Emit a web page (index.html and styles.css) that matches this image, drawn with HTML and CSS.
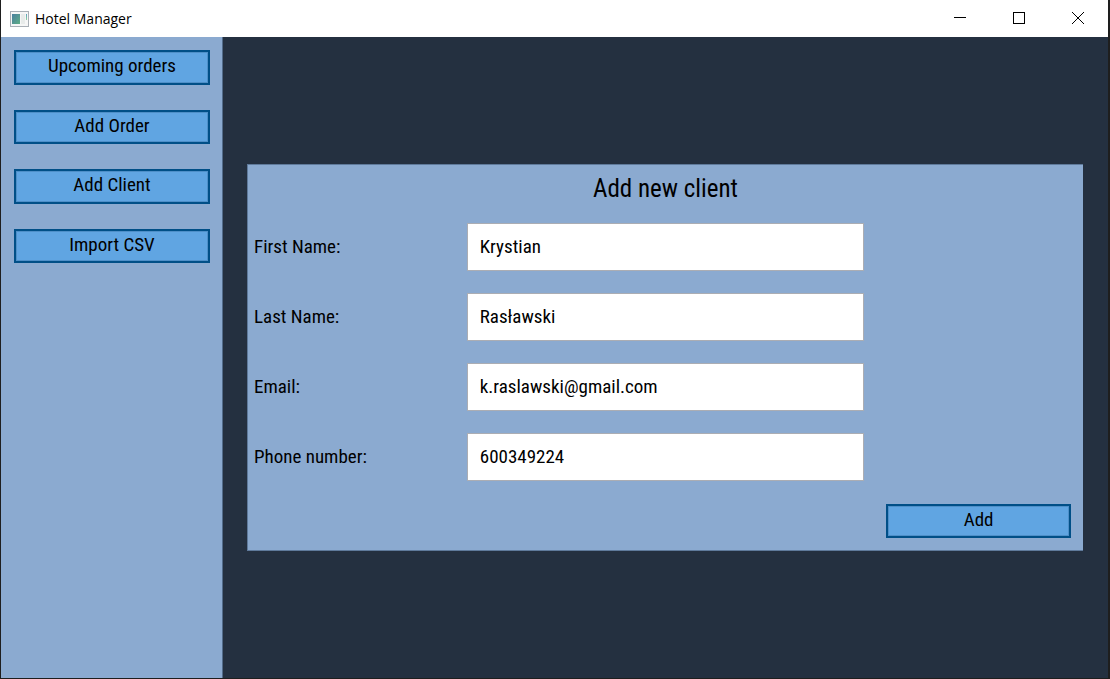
FILE: index.html
```html
<!DOCTYPE html>
<html lang="en">
<head>
<meta charset="utf-8">
<meta name="viewport" content="width=device-width, initial-scale=1">
<title>Hotel Manager</title>
<link rel="stylesheet" href="styles.css">
</head>
<body>
<div class="window">
  <header class="titlebar">
    <svg class="app-icon" width="20" height="16" viewBox="0 0 20 16" aria-hidden="true" shape-rendering="crispEdges">
      <defs>
        <linearGradient id="pane" x1="0" y1="0" x2="1" y2="1"><stop offset="0" stop-color="#4a7f9f"/><stop offset="1" stop-color="#5fae86"/></linearGradient>
        <linearGradient id="side" x1="0" y1="0" x2="0" y2="1"><stop offset="0" stop-color="#5c9fc0"/><stop offset="1" stop-color="#8fd39a"/></linearGradient>
      </defs>
      <rect x="0.5" y="0.5" width="18" height="15" fill="#f6f6f6" stroke="#a9afb6"/>
      <rect x="2" y="3" width="8" height="10" fill="url(#pane)"/>
      <rect x="11" y="3" width="4" height="10" fill="#e8ebea"/>
      <rect x="16" y="3" width="1" height="6" fill="url(#side)"/>
    </svg>
    <h1 class="app-name">Hotel Manager</h1>
    <div class="window-controls">
      <button class="window-button" type="button" aria-label="Minimize"><svg width="12" height="12" viewBox="0 0 12 12" shape-rendering="crispEdges"><path d="M0 5.5H12" stroke="#000"/></svg></button>
      <button class="window-button" type="button" aria-label="Maximize"><svg width="12" height="12" viewBox="0 0 12 12" shape-rendering="crispEdges"><rect x="0.5" y="0.5" width="11" height="11" fill="none" stroke="#000"/></svg></button>
      <button class="window-button" type="button" aria-label="Close"><svg width="12" height="12" viewBox="0 0 12 12"><path d="M0 0L12 12M12 0L0 12" stroke="#000"/></svg></button>
    </div>
  </header>
  <div class="content">
    <nav class="sidebar" aria-label="Main">
      <div class="menu">
        <button class="button" type="button">Upcoming orders</button>
        <button class="button" type="button">Add Order</button>
        <button class="button" type="button">Add Client</button>
        <button class="button" type="button">Import CSV</button>
      </div>
    </nav>
    <main class="workspace">
      <form class="panel">
        <h2 class="panel-title">Add new client</h2>
        <div class="field"><label for="first-name">First Name:</label><input id="first-name" type="text" value="Krystian"></div>
        <div class="field"><label for="last-name">Last Name:</label><input id="last-name" type="text" value="Rasławski"></div>
        <div class="field"><label for="email">Email:</label><input id="email" type="email" value="k.raslawski@gmail.com"></div>
        <div class="field"><label for="phone">Phone number:</label><input id="phone" type="tel" value="600349224"></div>
        <div class="actions"><button class="button" type="button">Add</button></div>
      </form>
    </main>
  </div>
</div>
</body>
</html>
```
FILE: styles.css
```css
* { box-sizing: border-box; }

body {
  margin: 0;
  background: #1e1e1e;
  color: #000;
  font-family: "Bahnschrift Condensed", "Roboto Condensed", "Liberation Sans Narrow", "Liberation Sans", sans-serif;
  font-size: 19px;
  font-weight: 400;
}

.window {
  display: flex;
  flex-direction: column;
  min-height: 100vh;
  padding: 0 2px 1px 1px;
}

.titlebar {
  display: flex;
  align-items: center;
  height: 37px;
  padding: 0 1px 0 9px;
  background: #fff;
}

.app-icon { margin-right: 5px; }

.app-name {
  margin: 0;
  font: 400 14px/20px "Segoe UI", "Open Sans", "Noto Sans", sans-serif;
}

.window-controls {
  display: flex;
  align-self: stretch;
  margin-left: auto;
}

.window-button {
  display: grid;
  place-items: center;
  width: 59px;
  padding: 0 0 1px;
  border: 0;
  background: transparent;
}

.content {
  display: grid;
  flex: 1;
  grid-template-columns: 222px 1fr;
}

.sidebar {
  padding: 13px 12px 13px 13px;
  border-right: 1px solid #526b8a;
  background: #8baad0;
}

.menu {
  display: grid;
  grid-auto-rows: 1fr;
  gap: 25px;
  height: 213px;
}

.button {
  width: 100%;
  padding: 0 0 2px;
  border: 2px solid #004f87;
  background: #60a5e2;
  box-shadow: inset 0 0 0 1px #4e8fc8;
  color: inherit;
  font: inherit;
  line-height: 26px;
}

.workspace {
  display: flex;
  align-items: center;
  padding: 24px 25px 24px 24px;
  background: #243040;
}

.panel {
  flex: 1;
  border: 1px solid #5f7a9b;
  border-right: 0;
  background: #8baad0;
}

.panel-title {
  margin: 0;
  font-size: 25px;
  font-weight: 400;
  line-height: 47px;
  text-align: center;
}

.field {
  display: grid;
  grid-template-columns: 1fr 2fr 1fr;
  align-items: center;
  height: 70px;
}

.field label { padding: 0 0 2px 6px; }

.field input {
  height: 48px;
  min-width: 0;
  margin: 0 10px;
  padding: 0 12px 2px;
  border: 1px solid #abadb3;
  border-radius: 0;
  background: #fff;
  color: inherit;
  font: inherit;
}

.actions {
  display: flex;
  padding: 12px 12px 12px calc(75% + 12px);
}

.actions .button { height: 34px; }
```
